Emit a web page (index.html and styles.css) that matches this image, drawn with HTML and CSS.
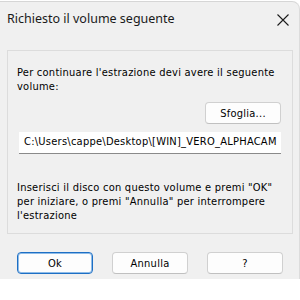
FILE: index.html
```html
<!DOCTYPE html>
<html lang="it">
<head>
<meta charset="utf-8">
<title>Richiesto il volume seguente</title>
<link rel="stylesheet" href="styles.css">
</head>
<body>
<div class="window">
  <div class="titlebar">
    <span class="title">Richiesto il volume seguente</span>
    <svg class="close" width="12" height="12" viewBox="0 0 12 12"><path d="M0.5 0.5 L11.5 11.5 M11.5 0.5 L0.5 11.5" stroke="#1b1b1b" stroke-width="1.1" fill="none"/></svg>
  </div>
  <div class="group">
    <p class="msg">Per continuare l'estrazione devi avere il seguente volume:</p>
    <div class="browse-row"><button class="btn browse">Sfoglia...</button></div>
    <div class="field">C:\Users\cappe\Desktop\[WIN]_VERO_ALPHACAM</div>
    <p class="msg lower">Inserisci il disco con questo volume e premi "OK" per iniziare, o premi "Annulla" per interrompere l'estrazione</p>
  </div>
  <div class="actions">
    <button class="btn primary">Ok</button>
    <button class="btn">Annulla</button>
    <button class="btn">?</button>
  </div>
</div>
</body>
</html>
```
FILE: styles.css
```css
html, body {
  margin: 0;
  padding: 0;
  background: #ffffff;
}
body {
  padding-top: 1px;
}
.window {
  width: 299px;
  height: 277px;
  background: #f0f0f0;
  border-top: 1px solid #d6d6d6;
  border-right: 1px solid #dcdcdc;
  border-top-right-radius: 8px;
  display: flex;
  flex-direction: column;
  color: #000;
  font-family: "DejaVu Sans Condensed", "DejaVu Sans", sans-serif;
  font-size: 11px;
  letter-spacing: 0.25px;
}
.titlebar {
  height: 48px;
  display: flex;
  align-items: flex-start;
  justify-content: space-between;
  padding: 0 10px 0 7px;
  box-sizing: border-box;
}
.title {
  font-family: "Noto Sans", sans-serif;
  font-size: 12.5px;
  letter-spacing: 0;
  color: #1a1a1a;
  margin-top: 8px;
}
.close {
  margin-top: 12px;
}
.group {
  margin: 0 6px 0 7px;
  height: 184px;
  box-sizing: border-box;
  border: 1px solid #dcdcdc;
  padding: 15px 11px 0 9px;
}
.msg {
  margin: 0;
  line-height: 14px;
}
.browse-row {
  display: flex;
  justify-content: flex-end;
  margin-top: 8px;
}
.btn {
  font-family: "DejaVu Sans Condensed", "DejaVu Sans", sans-serif;
  font-size: 11px;
  letter-spacing: 0.25px;
  color: #000;
  height: 22px;
  width: 76px;
  padding: 0;
  background: #fdfdfd;
  border: 1px solid #d0d0d0;
  border-bottom-color: #c0c0c0;
  border-radius: 4px;
  box-sizing: border-box;
}
.field {
  margin: 8px 0 0 2px;
  height: 22px;
  box-sizing: border-box;
  background: #fff;
  border-bottom: 1px solid #8a8a8a;
  padding: 3px 0 0 5px;
  white-space: nowrap;
  overflow: hidden;
  line-height: 14px;
}
.lower {
  margin-top: 27px;
}
.actions {
  display: flex;
  gap: 19px;
  padding: 18px 0 0 17px;
}
.primary {
  border: 1px solid #1d6fc4;
  box-shadow: inset 0 0 0 1px #8fbce8;
}
```
